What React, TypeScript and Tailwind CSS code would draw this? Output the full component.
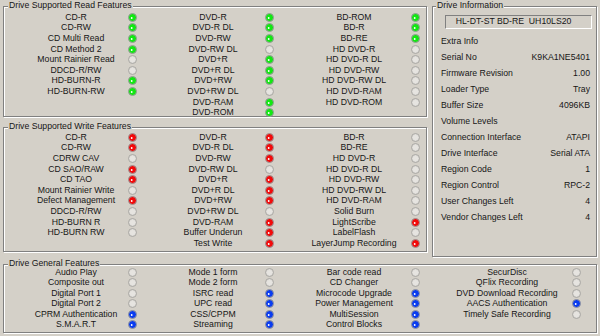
import React from "react";

type C = "g" | "r" | "b" | "o";

const FILL: Record<C, string> = { g: "#12e812", r: "#f20a0a", b: "#0a3cf0", o: "#dedcd8" };
const RIM: Record<C, string> = { g: "#9a9a9a", r: "#9a9a9a", b: "#9a9a9a", o: "#a9a7a3" };

function Led({ c }: { c: C }) {
  return (
    <svg width="9" height="9" viewBox="0 0 9 9" className="shrink-0">
      <circle cx="4.5" cy="4.5" r="4" fill={FILL[c]} stroke={RIM[c]} strokeWidth="1" />
      {c !== "o" ? <circle cx="3.7" cy="5" r="0.9" fill="#ffffff" /> : <circle cx="4.5" cy="4.5" r="2.6" fill="#e6e4e0" />}
    </svg>
  );
}

type Item = [string, C];

function Column({ items, colCls, labelCls, ledCls, rowCls }: { items: Item[]; colCls: string; labelCls: string; ledCls: string; rowCls: string }) {
  return (
    <div className={"flex flex-col shrink-0 " + colCls}>
      {items.map(([t, c], i) => (
        <div key={i} className={"flex items-center " + rowCls}>
          <span className={"text-center whitespace-nowrap " + labelCls}>{t}</span>
          <span className={"flex " + ledCls}>
            <Led c={c} />
          </span>
        </div>
      ))}
    </div>
  );
}

function GroupBox({ title, cls, children, titleCls }: { title: string; cls: string; children: React.ReactNode; titleCls: string }) {
  return (
    <div className={"relative border border-[#808080] shadow-[inset_1px_1px_0_#ffffff,1px_1px_0_#ffffff] " + cls}>
      <span className={"absolute top-[-7px] bg-[#d4d0c8] px-[1px] leading-[11px] whitespace-nowrap " + titleCls}>{title}</span>
      {children}
    </div>
  );
}

const readC1: Item[] = [
  ["CD-R", "g"], ["CD-RW", "g"], ["CD Multi Read", "g"], ["CD Method 2", "g"],
  ["Mount Rainier Read", "o"], ["DDCD-R/RW", "o"], ["HD-BURN-R", "g"], ["HD-BURN-RW", "g"],
];
const readC2: Item[] = [
  ["DVD-R", "g"], ["DVD-R DL", "g"], ["DVD-RW", "g"], ["DVD-RW DL", "o"], ["DVD+R", "g"],
  ["DVD+R DL", "g"], ["DVD+RW", "g"], ["DVD+RW DL", "o"], ["DVD-RAM", "g"], ["DVD-ROM", "g"],
];
const readC3: Item[] = [
  ["BD-ROM", "g"], ["BD-R", "g"], ["BD-RE", "g"], ["HD DVD-R", "o"], ["HD DVD-R DL", "o"],
  ["HD DVD-RW", "o"], ["HD DVD-RW DL", "o"], ["HD DVD-RAM", "o"], ["HD DVD-ROM", "o"],
];
const writeC1: Item[] = [
  ["CD-R", "r"], ["CD-RW", "r"], ["CDRW CAV", "o"], ["CD SAO/RAW", "r"], ["CD TAO", "r"],
  ["Mount Rainier Write", "o"], ["Defect Management", "r"], ["DDCD-R/RW", "o"], ["HD-BURN R", "o"], ["HD-BURN RW", "o"],
];
const writeC2: Item[] = [
  ["DVD-R", "r"], ["DVD-R DL", "r"], ["DVD-RW", "r"], ["DVD-RW DL", "o"], ["DVD+R", "r"], ["DVD+R DL", "r"],
  ["DVD+RW", "r"], ["DVD+RW DL", "o"], ["DVD-RAM", "r"], ["Buffer Underun", "r"], ["Test Write", "r"],
];
const writeC3: Item[] = [
  ["BD-R", "o"], ["BD-RE", "o"], ["HD DVD-R", "o"], ["HD DVD-R DL", "o"], ["HD DVD-RW", "o"], ["HD DVD-RW DL", "o"],
  ["HD DVD-RAM", "o"], ["Solid Burn", "o"], ["LightScribe", "r"], ["LabelFlash", "o"], ["LayerJump Recording", "r"],
];
const genC1: Item[] = [
  ["Audio Play", "o"], ["Composite out", "o"], ["Digital Port 1", "o"], ["Digital Port 2", "o"],
  ["CPRM Authentication", "b"], ["S.M.A.R.T", "b"],
];
const genC2: Item[] = [
  ["Mode 1 form", "o"], ["Mode 2 form", "o"], ["ISRC read", "b"], ["UPC read", "b"], ["CSS/CPPM", "b"], ["Streaming", "b"],
];
const genC3: Item[] = [
  ["Bar code read", "o"], ["CD Changer", "o"], ["Microcode Upgrade", "b"], ["Power Management", "b"],
  ["MultiSession", "b"], ["Control Blocks", "b"],
];
const genC4: Item[] = [
  ["SecurDisc", "o"], ["QFlix Recording", "o"], ["DVD Download Recording", "o"], ["AACS Authentication", "b"],
  ["Timely Safe Recording", "o"],
];

const info: [string, string][] = [
  ["Extra Info", ""],
  ["Serial No", "K9KA1NE5401"],
  ["Firmware Revision", "1.00"],
  ["Loader Type", "Tray"],
  ["Buffer Size", "4096KB"],
  ["Volume Levels", ""],
  ["Connection Interface", "ATAPI"],
  ["Drive Interface", "Serial ATA"],
  ["Region Code", "1"],
  ["Region Control", "RPC-2"],
  ["User Changes Left", "4"],
  ["Vendor Changes Left", "4"],
];

export default function App() {
  return (
    <div className="w-[600px] h-[336px] overflow-hidden bg-[#d4d0c8] pt-[6px] pl-[3px] text-[8.7px] text-[#161616] font-['Liberation_Sans',Arial,sans-serif]">
      <div className="flex">
        <div className="flex flex-col w-[424px]">
          <GroupBox title="Drive Supported Read Features" cls="h-[111px] pt-[5px] flex" titleCls="left-[4px]">
            <Column items={readC1} colCls="ml-[22px]" labelCls="w-[100px]" ledCls="ml-[2px]" rowCls="h-[10.6px]" />
            <Column items={readC2} colCls="ml-[26px]" labelCls="w-[100px]" ledCls="ml-[2px]" rowCls="h-[10.6px]" />
            <Column items={readC3} colCls="ml-[25px]" labelCls="w-[110px]" ledCls="ml-[2px]" rowCls="h-[10.6px]" />
          </GroupBox>
          <GroupBox title="Drive Supported Write Features" cls="mt-[10px] h-[125px] pt-[4px] flex" titleCls="left-[4px]">
            <Column items={writeC1} colCls="ml-[22px]" labelCls="w-[100px]" ledCls="ml-[2px]" rowCls="h-[10.6px]" />
            <Column items={writeC2} colCls="ml-[26px]" labelCls="w-[100px]" ledCls="ml-[2px]" rowCls="h-[10.6px]" />
            <Column items={writeC3} colCls="ml-[25px]" labelCls="w-[110px]" ledCls="ml-[2px]" rowCls="h-[10.6px]" />
          </GroupBox>
        </div>
        <GroupBox title="Drive Information" cls="ml-[5px] w-[165px] h-[251px] flex flex-col" titleCls="left-[3px]">
          <div className="mt-[8px] ml-[12px] w-[147px] h-[14px] border-t border-l border-[#808080] border-b-white border-r-white border-b border-r flex items-center justify-center pr-[10px] whitespace-pre">
            {"HL-DT-ST BD-RE  UH10LS20"}
          </div>
          <div className="mt-[5px] flex flex-col">
            {info.map(([k, v]) => (
              <div key={k} className="h-[16px] flex items-center justify-between pl-[8px] pr-[6px] whitespace-nowrap">
                <span>{k}</span>
                <span>{v}</span>
              </div>
            ))}
          </div>
        </GroupBox>
      </div>
      <GroupBox title="Drive General Features" cls="mt-[7px] w-[594px] h-[69px] pt-[2px] flex" titleCls="left-[4px]">
        <Column items={genC1} colCls="ml-[22px]" labelCls="w-[100px]" ledCls="ml-[2px]" rowCls="h-[10.5px]" />
        <Column items={genC2} colCls="ml-[26px]" labelCls="w-[100px]" ledCls="ml-[2px]" rowCls="h-[10.5px]" />
        <Column items={genC3} colCls="ml-[25px]" labelCls="w-[110px]" ledCls="ml-[2px]" rowCls="h-[10.5px]" />
        <Column items={genC4} colCls="ml-[32px]" labelCls="w-[110px]" ledCls="ml-[10px]" rowCls="h-[10.5px]" />
      </GroupBox>
    </div>
  );
}
